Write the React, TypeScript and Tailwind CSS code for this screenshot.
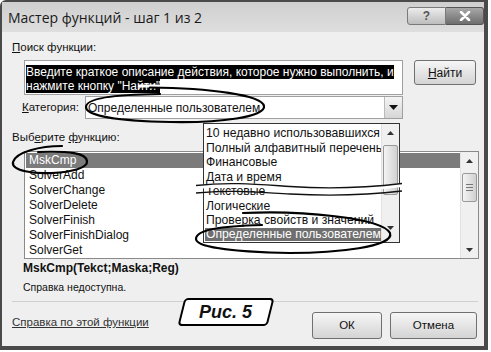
import React from "react";

const listItems = [
  "MskCmp",
  "SolverAdd",
  "SolverChange",
  "SolverDelete",
  "SolverFinish",
  "SolverFinishDialog",
  "SolverGet",
];

const dropItems = [
  "10 недавно использовавшихся",
  "Полный алфавитный перечень",
  "Финансовые",
  "Дата и время",
  "Текстовые",
  "Логические",
  "Проверка свойств и значений",
  "Определенные пользователем",
];

function Arrow({ down }: { down?: boolean }) {
  return (
    <svg width="7" height="4" viewBox="0 0 7 4">
      <path d={down ? "M0 0 L7 0 L3.5 4 Z" : "M0 4 L7 4 L3.5 0 Z"} fill="#333" />
    </svg>
  );
}

export default function App() {
  return (
    <div className="relative h-[352px] w-[491px] overflow-hidden bg-white font-['Liberation_Sans',Arial,sans-serif] text-[12px] text-[#111]">
      {/* window frame */}
      <div className="flex h-[350px] w-[488px] flex-col rounded-tl-[6px] border-t-2 border-r-4 border-b-4 border-l-2 border-[#4a4a4a] bg-[#efefef]">
        {/* title bar */}
        <div className="flex h-[30px] items-start bg-gradient-to-b from-[#cfcfcf] to-[#dedede] pl-[6px]">
          <div className="mt-[6px] font-['Open_Sans',sans-serif] text-[14px] leading-[20px] text-[#1a1a1a]">
            Мастер функций - шаг 1 из 2
          </div>
          <div className="mt-[5px] ml-auto flex">
            <div className="flex h-[18px] w-[39px] items-center justify-center rounded-l-[3px] border border-[#7a7a7a] bg-gradient-to-b from-[#ececec] to-[#bdbdbd] text-[12px] font-bold text-[#555]">
              ?
            </div>
            <div className="flex h-[18px] w-[38px] items-center justify-center rounded-r-[3px] border border-l-0 border-[#555] bg-gradient-to-b from-[#a8a8a8] to-[#6e6e6e]">
              <svg width="12" height="10" viewBox="0 0 12 10">
                <path d="M2 1 L10 9 M10 1 L2 9" stroke="#fff" strokeWidth="2.6" strokeLinecap="round" />
              </svg>
            </div>
          </div>
        </div>

        {/* body */}
        <div className="relative flex flex-1 flex-col pl-[10px]">
          <div className="mt-[8px] h-[14px] leading-[14px] text-[11.5px]">
            <span className="underline">П</span>оиск функции:
          </div>

          <div className="mt-[6px] flex items-start">
            <div className="ml-[12px] h-[35px] w-[379px] border border-[#a0a0a0] bg-white pt-[4px] pl-[1px] text-[12px] leading-[14px]">
              <div>
                <span className="bg-black text-white">Введите краткое описание действия, которое нужно выполнить, и</span>
              </div>
              <div>
                <span className="bg-black text-white">нажмите кнопку "Найти"</span>
              </div>
            </div>
            <button className="ml-[11px] h-[25px] w-[62px] rounded-[3px] border border-[#707070] bg-gradient-to-b from-[#f6f6f6] to-[#d4d4d4] text-[12px]">
              <span className="underline">Н</span>айти
            </button>
          </div>

          <div className="mt-[1px] flex h-[23px] items-center">
            <div className="ml-[10px] w-[63px] text-[11.5px]">
              <span className="underline">К</span>атегория:
            </div>
            <div className="flex h-[23px] w-[318px] items-center border border-[#a0a0a0] bg-white">
              <div className="flex-1 pl-[2px] text-[12px]">Определенные пользователем</div>
              <div className="flex h-[21px] w-[18px] items-center justify-center border-l border-[#bbb] bg-gradient-to-b from-[#f4f4f4] to-[#d6d6d6]">
                <svg width="9" height="5" viewBox="0 0 9 5">
                  <path d="M0 0 L9 0 L4.5 5 Z" fill="#111" />
                </svg>
              </div>
            </div>
          </div>

          <div className="mt-[11px] h-[14px] text-[11.5px] leading-[14px]">
            Выб<span className="underline">е</span>рите <span className="underline">ф</span>ункцию:
          </div>

          {/* function list */}
          <div className="mt-[7px] ml-[12px] flex h-[108px] w-[455px] border border-[#8a8a8a] bg-white">
            <div className="flex-1 pt-[1px] pl-[1px]">
              {listItems.map((t, i) => (
                <div
                  key={t}
                  className={
                    i === 0
                      ? "h-[15px] bg-[#7b7b7b] pl-[3px] text-[12px] leading-[15px] text-white"
                      : "h-[15px] pl-[3px] text-[12px] leading-[15px]"
                  }
                >
                  {t}
                </div>
              ))}
            </div>
            <div className="flex w-[18px] flex-col items-center border-l border-[#e2e2e2] bg-[#f0f0f0]">
              <div className="flex h-[17px] items-center">
                <Arrow />
              </div>
              <div className="mt-[4px] flex h-[29px] w-[15px] flex-col items-center justify-center gap-[2px] rounded-[2px] border border-[#999] bg-gradient-to-r from-[#f4f4f4] to-[#d0d0d0]">
                <div className="h-px w-[7px] bg-[#777]" />
                <div className="h-px w-[7px] bg-[#777]" />
                <div className="h-px w-[7px] bg-[#777]" />
              </div>
              <div className="mt-auto flex h-[17px] items-center">
                <Arrow down />
              </div>
            </div>
          </div>

          <div className="mt-[2px] ml-[11px] h-[14px] text-[12px] font-bold leading-[14px]">MskCmp(Tekct;Maska;Reg)</div>
          <div className="mt-[5px] ml-[11px] h-[14px] text-[10.5px] leading-[14px]">Справка недоступна.</div>

          <div className="mt-[7px] mr-[6px] h-px bg-[#cfcfcf]" />

          <div className="mt-[10px] flex items-start">
            <div className="mt-[3px] text-[11.5px] leading-[14px] text-[#333] underline">Справка по этой функции</div>
            <button className="ml-auto h-[27px] w-[70px] rounded-[3px] border border-[#707070] bg-gradient-to-b from-[#f6f6f6] to-[#d4d4d4] text-[11.5px]">
              ОК
            </button>
            <button className="mr-[7px] ml-[8px] h-[27px] w-[87px] rounded-[3px] border border-[#707070] bg-gradient-to-b from-[#f6f6f6] to-[#d4d4d4] text-[11.5px]">
              Отмена
            </button>
          </div>
        </div>
      </div>

      {/* opened category drop-down */}
      <div className="absolute top-[123px] left-[203px] flex h-[120px] w-[197px] overflow-hidden border border-[#333] bg-white">
        <div className="min-w-0 flex-1 overflow-hidden pt-[2px] pl-[1px] text-[12.2px]">
          {dropItems.map((t, i) => (
            <div
              key={t}
              className={
                i === 7
                  ? "mt-[0.5px] h-[13px] whitespace-nowrap bg-[#6f6f6f] pl-[1px] leading-[13px] text-white"
                  : "h-[14.5px] whitespace-nowrap pl-[1px] leading-[14.5px]"
              }
            >
              {t}
            </div>
          ))}
        </div>
        <div className="flex w-[18px] shrink-0 flex-col items-center border-l border-[#e2e2e2] bg-[#f0f0f0]">
          <div className="flex h-[17px] items-center">
            <Arrow />
          </div>
          <div className="mt-[4px] h-[50px] w-[15px] rounded-[2px] border border-[#999] bg-gradient-to-r from-[#f4f4f4] to-[#d0d0d0]" />
          <div className="mt-auto mb-[6px] flex h-[17px] items-center">
            <Arrow down />
          </div>
        </div>
      </div>

      {/* figure label */}
      <div className="absolute top-[298px] left-[181px] flex h-[28px] w-[90px] -skew-x-[14deg] items-center justify-center rounded-[4px] border-2 border-black bg-white">
        <span className="skew-x-[14deg] text-[18px] font-bold italic leading-[20px]">Рис. 5</span>
      </div>

      {/* hand-drawn annotations */}
      <svg className="pointer-events-none absolute inset-0" width="491" height="352" viewBox="0 0 491 352">
        {/* break in the drop-down */}
        <path d="M196 187 C 230 183, 260 186, 290 188 S 360 190, 402 185" fill="none" stroke="#fff" strokeWidth="4" />
        <path d="M196 185.5 C 230 181.5, 260 184.5, 290 186.5 S 360 188.5, 402 183.5" fill="none" stroke="#111" strokeWidth="1.3" />
        <path d="M196 193 C 230 189.5, 260 192.5, 290 194 S 360 196, 402 191" fill="none" stroke="#111" strokeWidth="1.3" />

        {/* category ellipse */}
        <path d="M138 86 L162 86" stroke="#fff" strokeWidth="3" />
        <path
          d="M150 87.5 C 210 88, 262 95, 264 106 C 266 117, 220 123, 170 122 C 120 121, 86 116, 86 107 C 86 99, 110 94.5, 160 94"
          fill="none"
          stroke="#000"
          strokeWidth="2.2"
          strokeLinecap="round"
        />
        {/* MskCmp ellipse */}
        <path
          d="M62 146 C 40 146, 16 152, 13 162 C 11 171, 35 174, 52 173 C 72 172, 88 168, 87 161 C 86 153, 70 151, 38 152"
          fill="none"
          stroke="#000"
          strokeWidth="2.2"
          strokeLinecap="round"
        />
        {/* user-defined ellipse */}
        <path
          d="M243 213 C 300 210, 382 218, 390 233 C 395 247, 335 253, 290 253 C 240 252, 196 248, 196 239 C 196 230, 220 226, 262 225"
          fill="none"
          stroke="#000"
          strokeWidth="2.2"
          strokeLinecap="round"
        />
      </svg>
    </div>
  );
}
